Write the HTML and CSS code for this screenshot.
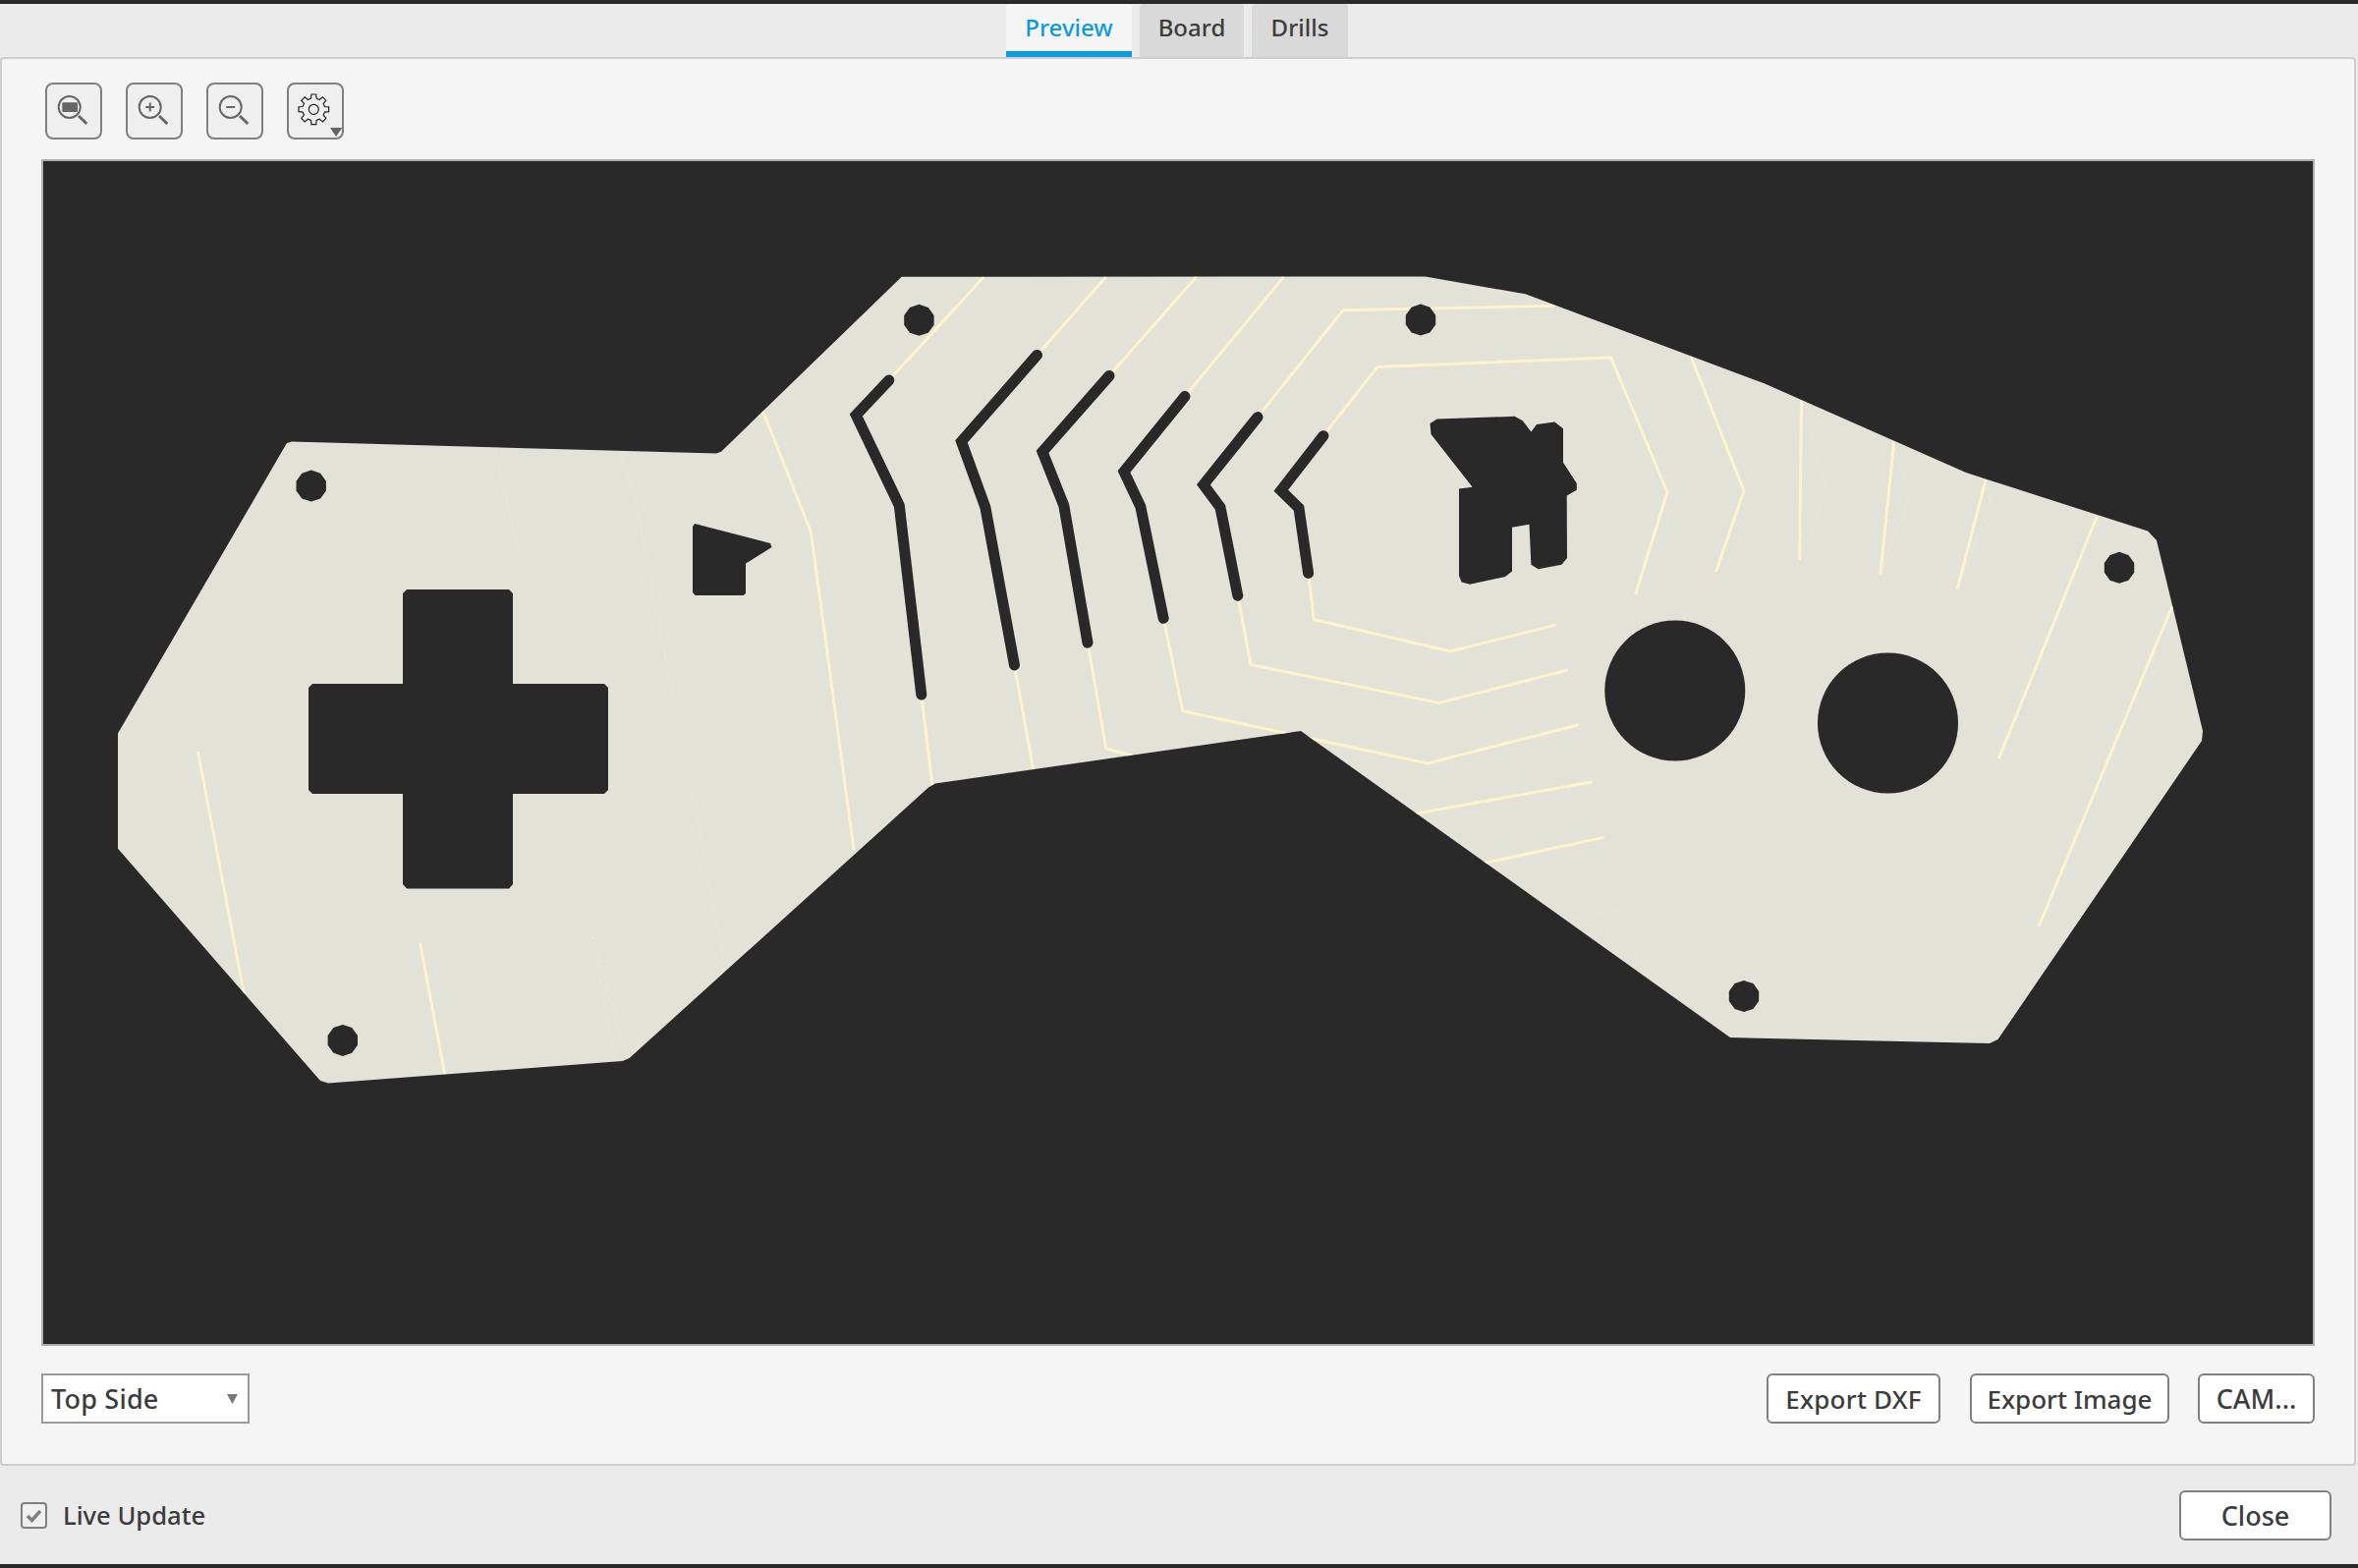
FILE: index.html
```html
<!DOCTYPE html>
<html lang="en">
<head>
<meta charset="utf-8">
<title>Preview</title>
<link rel="stylesheet" href="styles.css">
</head>
<body>
<div class="window">
  <nav class="tabs">
    <div class="tab tab-active">Preview</div>
    <div class="tab tab-board">Board</div>
    <div class="tab tab-drills">Drills</div>
  </nav>
  <main class="panel">
    <div class="toolbar">
      <button class="tool" aria-label="Zoom fit">
        <svg class="tool-icon" viewBox="0 0 54 54">
          <circle class="lens" cx="22.7" cy="23" r="11"/>
          <rect class="lens-fill" x="15.3" y="18.3" width="15.7" height="9.7" rx="1"/>
          <line class="lens-handle" x1="32" y1="32" x2="40.3" y2="40"/>
        </svg>
      </button>
      <button class="tool" aria-label="Zoom in">
        <svg class="tool-icon" viewBox="0 0 54 54">
          <circle class="lens" cx="22.7" cy="23" r="11"/>
          <line class="lens-sign" x1="18.2" y1="23" x2="27.2" y2="23"/>
          <line class="lens-sign" x1="22.7" y1="18.5" x2="22.7" y2="27.5"/>
          <line class="lens-handle" x1="32" y1="32" x2="40.3" y2="40"/>
        </svg>
      </button>
      <button class="tool" aria-label="Zoom out">
        <svg class="tool-icon" viewBox="0 0 54 54">
          <circle class="lens" cx="22.7" cy="23" r="11"/>
          <line class="lens-sign" x1="18.2" y1="23" x2="27.2" y2="23"/>
          <line class="lens-handle" x1="32" y1="32" x2="40.3" y2="40"/>
        </svg>
      </button>
      <button class="tool" aria-label="Settings">
        <svg class="tool-icon" viewBox="0 0 54 54">
          <g transform="translate(25.3 25.3)">
            <polygon class="gear" points="-2.78,-11.16 -2.42,-15.31 2.42,-15.31 2.78,-11.16 5.92,-9.86 9.11,-12.54 12.54,-9.11 9.86,-5.92 11.16,-2.78 15.31,-2.42 15.31,2.42 11.16,2.78 9.86,5.92 12.54,9.11 9.11,12.54 5.92,9.86 2.78,11.16 2.42,15.31 -2.42,15.31 -2.78,11.16 -5.92,9.86 -9.11,12.54 -12.54,9.11 -9.86,5.92 -11.16,2.78 -15.31,2.42 -15.31,-2.42 -11.16,-2.78 -9.86,-5.92 -12.54,-9.11 -9.11,-12.54 -5.92,-9.86"/>
            <circle class="gear" r="5"/>
          </g>
          <polygon class="gear-arrow" points="42,44 54.3,44 48,53"/>
        </svg>
      </button>
    </div>

    <div class="canvas">
      <svg class="board" viewBox="44 164 2310 1204" width="2310" height="1204">
        <defs>
          <clipPath id="outline">
            <polygon points="289,456 292,451 297,449.6 729,461.5 734,459.7 917.7,281.8 1450.7,281.4 1552.6,299.3 1795,390 2001,481 2186,540.6 2195,550 2242,744 2241,754 2033.5,1058 2025,1062 1761,1056 1324,744 952,797.5 945,801.5 640.6,1077 633.5,1080 334,1102.5 326,1100 120,863.7 120,746.6"/>
          </clipPath>
          <polygon id="screw" points="0,-16 9.4,-12.9 15.2,-4.9 15.2,4.9 9.4,12.9 0,16 -9.4,12.9 -15.2,4.9 -15.2,-4.9 -9.4,-12.9"/>
          <circle id="button-hole" r="71.5"/>
        </defs>

        <polygon class="pcb" points="289,456 292,451 297,449.6 729,461.5 734,459.7 917.7,281.8 1450.7,281.4 1552.6,299.3 1795,390 2001,481 2186,540.6 2195,550 2242,744 2241,754 2033.5,1058 2025,1062 1761,1056 1324,744 952,797.5 945,801.5 640.6,1077 633.5,1080 334,1102.5 326,1100 120,863.7 120,746.6"/>

        <g class="clipped">
          <polyline class="copper" points="201.4,765 248.3,1010.7"/>
          <polyline class="copper" points="427.7,960 452.6,1093.3"/>
          <polyline class="copper" points="776.6,418.8 825.4,541.3 869,865"/>
          <polyline class="copper" points="1001.4,281.8 904.8,387"/>
          <polyline class="copper" points="937.8,707 948.8,798.8"/>
          <polyline class="copper" points="1125.8,281.8 1055.5,361.4"/>
          <polyline class="copper" points="1032.5,677 1051.7,783.5"/>
          <polyline class="copper" points="1217.7,281.8 1129,382.5"/>
          <polyline class="copper" points="1107,654.2 1125.8,762 1152,769"/>
          <polyline class="copper" points="1306.7,281.8 1206,403.5"/>
          <polyline class="copper" points="1184.2,629.3 1203.8,723.8 1453,777 1607,737.7"/>
          <polyline class="copper" points="1280,424.6 1367,315.8 1582,311.3"/>
          <polyline class="copper" points="1259.8,606.3 1273,676.4 1465,715.4 1595.7,682"/>
          <polyline class="copper" points="1346.9,443.7 1402,373.4 1639.7,364 1697,501 1664.6,605"/>
          <polyline class="copper" points="1331.6,583.4 1337.3,630.5 1476,663 1583.7,636"/>
          <polyline class="copper" points="1721,362.7 1775,499.7 1746.4,582.3"/>
          <polyline class="copper" points="1833.5,408 1831.6,570"/>
          <polyline class="copper" points="1927.7,449.7 1913.9,585"/>
          <polyline class="copper" points="2021,488.6 1992.3,599.3"/>
          <polyline class="copper" points="2134.4,525.5 2034.3,772.4"/>
          <polyline class="copper" points="2210.7,617.3 2075,943"/>
          <polyline class="copper" points="1420,832 1620.6,795.7"/>
          <polyline class="copper" points="1480,885 1632.5,852.4"/>
          <polyline class="trace-faint" points="504,457.4 527.3,560.7"/>
          <polyline class="trace-faint" points="631,460.6 645.5,501 684.7,707.6"/>
          <polyline class="trace-faint" points="702,792.6 737.3,980.8"/>
          <polyline class="trace-faint" points="602.4,948.7 638.3,1077"/>
          <polyline class="trace-faint" points="602.4,948.7 626.3,1079.5"/>
          <polyline class="trace-faint" points="1833.5,412 1859,499 1832,568"/>
          <polyline class="trace-faint" points="1927.7,452 1943.5,507.8 1914,583"/>
          <polyline class="trace-faint" points="2021,491 2027,510 1993,597"/>
          <polyline class="trace-faint" points="1601,936 1649,926"/>
        </g>

        <polyline class="slot" points="904.8,387 871.3,422.6 915.3,514.5 937.8,707"/>
        <polyline class="slot" points="1055.5,361.4 978.5,449.4 1002.9,516.4 1032.5,677"/>
        <polyline class="slot" points="1129,382.5 1061,459.8 1082.8,514.5 1107,654.2"/>
        <polyline class="slot" points="1206,403.5 1144,480 1160.8,515.6 1184.2,629.3"/>
        <polyline class="slot" points="1280,424.6 1224.9,493.4 1242,516.4 1259.8,606.3"/>
        <polyline class="slot" points="1346.9,443.7 1303.8,499.2 1322,517.2 1331.6,583.4"/>

        <polygon class="cut" points="414,600 518,600 522,604 522,696 615,696 619,700 619,804 615,808 522,808 522,900 518,904.5 414,904.5 410,900 410,808 318,808 314,804 314,700 318,696 410,696 410,604"/>
        <polygon class="cut" points="705,536 707,533 784,553 785.5,557 759,573.5 759,604 756.5,606 707.6,606 705,603"/>
        <polygon class="cut" points="1455.5,431 1462.7,426.5 1541.6,423.8 1549.8,428.3 1558.4,439.5 1564,431.9 1582.3,429.6 1591,436.3 1591,470.7 1604.8,492 1604.8,498.8 1594.7,504.6 1595,568 1589.5,574.7 1565.6,579.2 1558.4,574.7 1556.5,533.7 1539,536.8 1539,581.4 1532,587 1496,594.8 1487.6,592.6 1485,586 1485,497.5 1498.6,495.7 1456.5,442"/>

        <use class="cut" href="#screw" x="316.7" y="494.6"/>
        <use class="cut" href="#screw" x="348.8" y="1058.9"/>
        <use class="cut" href="#screw" x="935.4" y="325.8"/>
        <use class="cut" href="#screw" x="1446" y="325.6"/>
        <use class="cut" href="#screw" x="2157" y="577.8"/>
        <use class="cut" href="#screw" x="1775" y="1014"/>
        <use class="cut" href="#button-hole" x="1704.8" y="703"/>
        <use class="cut" href="#button-hole" x="1921.5" y="736"/>
      </svg>
    </div>

    <div class="controls">
      <div class="select">
        <span class="select-label">Top Side</span>
        <svg class="select-arrow" viewBox="0 0 11 10"><polygon points="0,0 11,0 5.5,10"/></svg>
      </div>
      <div class="actions">
        <button class="btn btn-dxf">Export DXF</button>
        <button class="btn btn-image">Export Image</button>
        <button class="btn btn-cam">CAM...</button>
      </div>
    </div>
  </main>
  <footer class="footer">
    <label class="live">
      <span class="checkbox">
        <svg class="check" viewBox="0 0 23 23"><polyline points="5,12 9.5,16.5 18,7"/></svg>
      </span>
      <span class="live-label">Live Update</span>
    </label>
    <button class="btn btn-close">Close</button>
  </footer>
</div>
</body>
</html>
```

FILE: styles.css
```css
* { box-sizing: border-box; }

html, body { margin: 0; padding: 0; }

body {
  background: #ebebeb;
  color: #3c3c3c;
  font-family: "Noto Sans", "Open Sans", sans-serif;
  font-size: 26px;
  font-weight: 500;
}

.window {
  display: flex;
  flex-direction: column;
  width: 2400px;
  height: 1596px;
  border-top: 4px solid #292929;
  border-bottom: 4px solid #292929;
}

.tabs {
  display: flex;
  justify-content: center;
  gap: 8px;
  height: 54px;
  padding-right: 4px;
  font-size: 24px;
}

.tab {
  display: flex;
  align-items: center;
  justify-content: center;
  padding-bottom: 8px;
  background: #d9d9d9;
  border-radius: 4px 4px 0 0;
}

.tab-active {
  width: 128px;
  padding-bottom: 2px;
  background: #f5f5f5;
  color: #0d9bdc;
  border-bottom: 6px solid #0d9bdc;
}

.tab-board { width: 106px; }
.tab-drills { width: 98px; }

.panel {
  display: flex;
  flex-direction: column;
  width: 2398px;
  height: 1434px;
  padding: 24px 40px 41px;
  background: #f5f5f5;
  border: 2px solid #cdcdcd;
  border-radius: 4px;
}

.toolbar {
  display: flex;
  gap: 24px;
  height: 58px;
  padding-left: 4px;
}

.tool {
  width: 58px;
  height: 58px;
  padding: 0;
  background: #efefef;
  border: 2px solid #808080;
  border-radius: 8px;
}

.tool-icon {
  display: block;
  width: 54px;
  height: 54px;
}

.lens {
  fill: none;
  stroke: #666;
  stroke-width: 2;
}

.lens-fill { fill: #666; }

.lens-handle {
  stroke: #666;
  stroke-width: 3;
}

.lens-sign {
  stroke: #666;
  stroke-width: 2;
}

.gear {
  fill: none;
  stroke: #222;
  stroke-width: 1.2;
}

.gear-arrow { fill: #666; }

.canvas {
  width: 2314px;
  height: 1208px;
  margin-top: 20px;
  background: #292929;
  border: 2px solid #b0b0b0;
}

.board { display: block; }

.pcb { fill: #e3e2d8; }

.clipped { clip-path: url(#outline); }

.copper {
  fill: none;
  stroke: #fdf3cc;
  stroke-width: 3;
}

.trace-faint {
  fill: none;
  stroke: #fdf3cc;
  stroke-width: 1;
  stroke-dasharray: 2 3;
  opacity: 0.5;
}

.slot {
  fill: none;
  stroke: #292929;
  stroke-width: 11;
  stroke-linecap: round;
  stroke-linejoin: miter;
}

.cut { fill: #292929; }

.controls {
  display: flex;
  justify-content: space-between;
  height: 51px;
  margin-top: 28px;
}

.select {
  display: flex;
  align-items: center;
  justify-content: space-between;
  width: 212px;
  padding: 0 10px 0 8px;
  background: #fff;
  border: 2px solid #9a9a9a;
}

.select-label {
  font-size: 27px;
  letter-spacing: 0.2px;
}

.select-arrow {
  width: 11px;
  height: 10px;
  fill: #777;
}

.actions {
  display: flex;
  gap: 30px;
}

.btn {
  height: 51px;
  padding: 0;
  color: #3c3c3c;
  font: inherit;
  background: #fff;
  border: 2px solid #808080;
  border-radius: 6px;
}

.btn-dxf { width: 177px; letter-spacing: 0.2px; }
.btn-image { width: 203px; margin-right: -1px; }
.btn-cam { width: 119px; font-size: 27px; }
.btn-close { width: 155px; font-size: 27px; }

.footer {
  display: flex;
  align-items: center;
  justify-content: space-between;
  flex: 1;
  padding: 0 27px 0 21px;
}

.live {
  display: flex;
  align-items: center;
  gap: 16px;
}

.live-label { font-size: 25.6px; }

.checkbox {
  display: block;
  width: 27px;
  height: 27px;
  background: #f0f0f0;
  border: 2px solid #808080;
  border-radius: 4px;
}

.check {
  display: block;
  width: 23px;
  height: 23px;
  fill: none;
  stroke: #808080;
  stroke-width: 3.5;
}
```
